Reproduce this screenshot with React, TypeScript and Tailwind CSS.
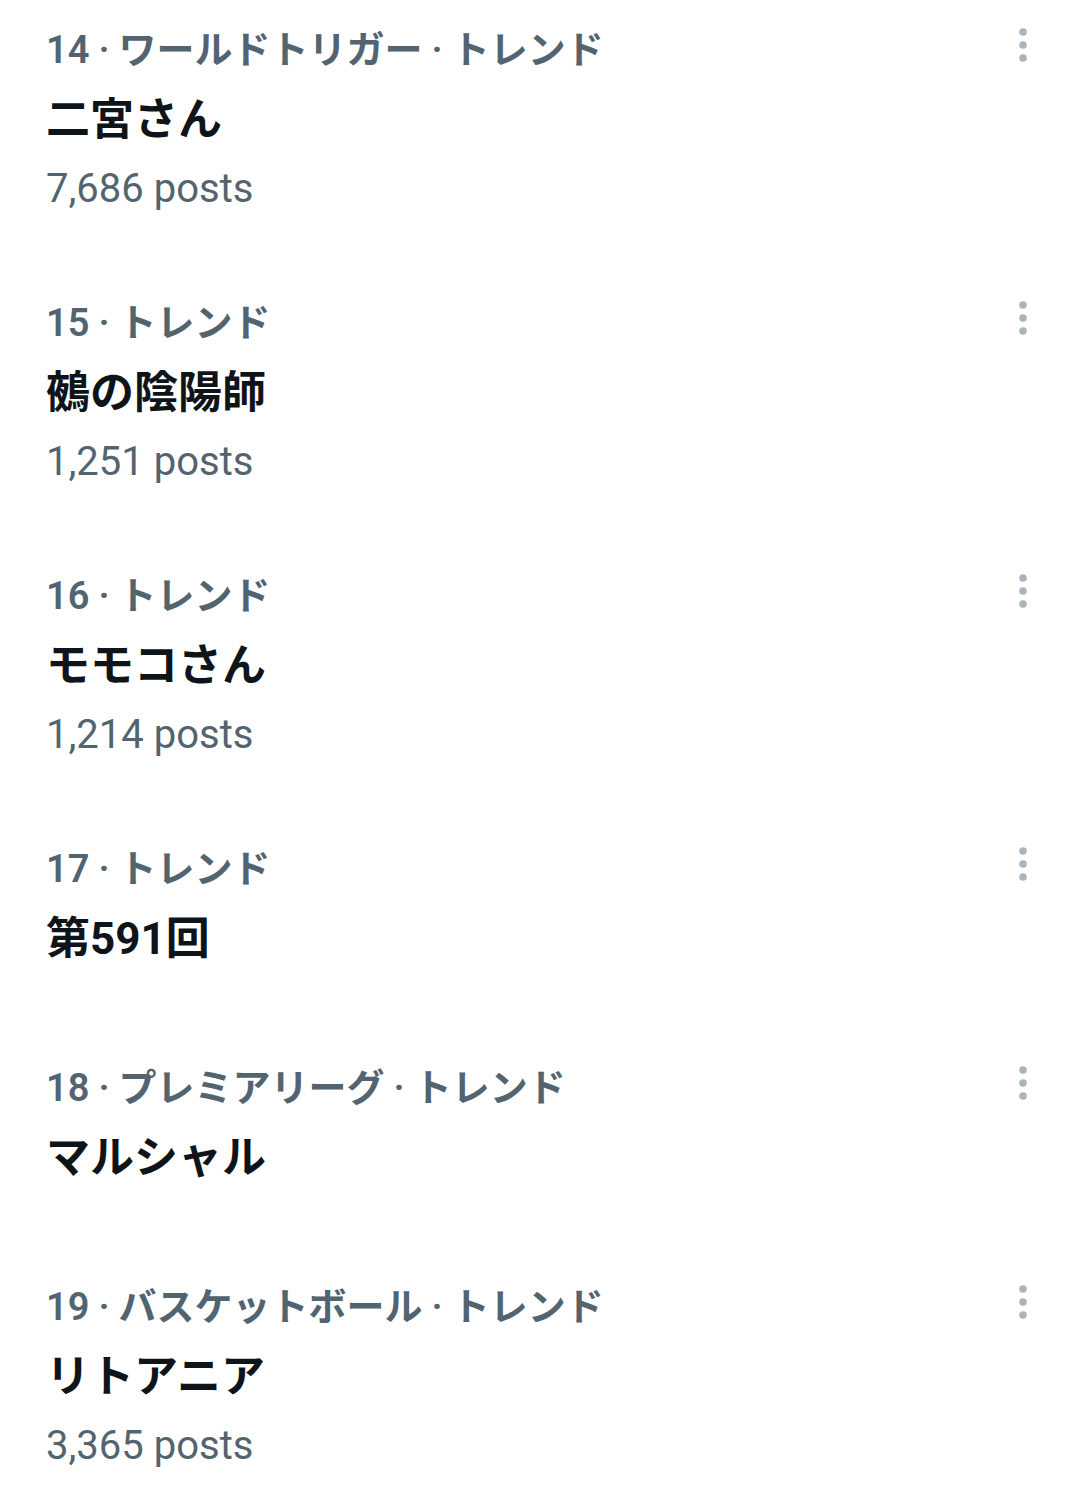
const TRENDS = [
  { rank: 14, context: 'ワールドトリガー・トレンド', title: '二宮さん', posts: '7,686 posts' },
  { rank: 15, context: 'トレンド', title: '鵺の陰陽師', posts: '1,251 posts' },
  { rank: 16, context: 'トレンド', title: 'モモコさん', posts: '1,214 posts' },
  { rank: 17, context: 'トレンド', title: '第591回', posts: null },
  { rank: 18, context: 'プレミアリーグ・トレンド', title: 'マルシャル', posts: null },
  { rank: 19, context: 'バスケットボール・トレンド', title: 'リトアニア', posts: '3,365 posts' },
];

const FONT = { fontFamily: 'Roboto, "Noto Sans CJK JP", sans-serif' };

const MoreIcon = () => (
  <svg width="10" height="36" viewBox="0 0 10 36" fill="#aab4bd">
    <circle cx="5" cy="5" r="3.8" />
    <circle cx="5" cy="18" r="3.8" />
    <circle cx="5" cy="31" r="3.8" />
  </svg>
);

function TrendItem({ rank, context, title, posts }: (typeof TRENDS)[number]) {
  const parts = context.split('・');
  return (
    <div className="flex pl-[46px] pr-[51px] pt-[26px] pb-[60px]">
      <div className="flex-1 flex flex-col">
        <div className="h-[48px] leading-[48px] text-[38px] font-semibold text-[#536471] whitespace-nowrap">
          {rank}
          {parts.map((p) => (
            <span key={p}>
              <span className="mx-[9px]">·</span>
              {p}
            </span>
          ))}
        </div>
        <div className="mt-[7px] h-[78px] leading-[78px] text-[44px] font-bold text-[#0f1419]">{title}</div>
        {posts && (
          <div className="mt-[6px] h-[48px] leading-[48px] text-[40px] text-[#536471]">{posts}</div>
        )}
      </div>
      <div className="pt-[1px]">
        <MoreIcon />
      </div>
    </div>
  );
}

export default function App() {
  return (
    <div className="w-[1079px] h-[1487px] bg-white overflow-hidden" style={FONT}>
      {TRENDS.map((t) => (
        <TrendItem key={t.rank} {...t} />
      ))}
    </div>
  );
}
